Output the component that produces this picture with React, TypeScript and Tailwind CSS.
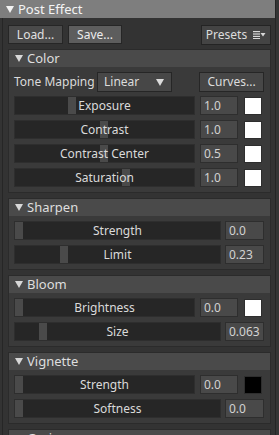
import React from "react";

const Tri = ({ className = "" }: { className?: string }) => (
  <svg width="8" height="7" viewBox="0 0 8 7" className={className}>
    <path d="M0 0 L8 0 L4 7 Z" fill="currentColor" />
  </svg>
);

const SectionHeader = ({ title }: { title: string }) => (
  <div className="h-[17px] bg-[#4a4a4a] flex items-center pl-[6px] gap-[4px] text-[#dedede] text-[13px] leading-none">
    <Tri className="text-[#d8d8d8]" />
    <span>{title}</span>
  </div>
);

const Slider = ({ label, pos }: { label: string; pos: number }) => (
  <div className="relative flex-1 h-[19px] bg-[#262626] border border-[#2e2e2e] flex items-center justify-center">
    <div
      className="absolute top-0 bottom-0 w-[8px] bg-[#4a4a4a]"
      style={{ left: pos }}
    />
    <span className="relative text-[12px] text-[#dadada] leading-none">{label}</span>
  </div>
);

const Value = ({ v, w }: { v: string; w: string }) => (
  <div className={`${w} h-[19px] bg-[#494949] border border-[#2e2e2e] flex items-center pl-[3px] text-[12px] text-[#d2d2d2] leading-none`}>
    {v}
  </div>
);

const RowSwatch = ({ label, pos, v, color }: { label: string; pos: number; v: string; color: string }) => (
  <div className="flex items-center pr-[3px]">
    <Slider label={label} pos={pos} />
    <div className="w-[5px]" />
    <Value v={v} w="w-[38px]" />
    <div className="w-[6px]" />
    <div className={`w-[18px] h-[18px] border border-[#2e2e2e] ${color}`} />
  </div>
);

const Row = ({ label, pos, v }: { label: string; pos: number; v: string }) => (
  <div className="flex items-center pr-[1px]">
    <Slider label={label} pos={pos} />
    <div className="w-[4px]" />
    <Value v={v} w="w-[39px]" />
  </div>
);

const Section = ({ title, children }: { title: string; children?: React.ReactNode }) => (
  <div className="border border-[#2b2b2b] bg-[#3a3a3a]">
    <SectionHeader title={title} />
    {children ? (
      <div className="px-[5px] pt-[5px] pb-[5px] flex flex-col gap-[5px]">{children}</div>
    ) : null}
  </div>
);

export default function App() {
  return (
    <div
      className="w-[279px] h-[435px] overflow-hidden bg-[#333333] flex"
      style={{ fontFamily: '"Noto Sans", "Open Sans", sans-serif' }}
    >
      <div className="w-[275px] flex flex-col">
        <div className="h-[18px] shrink-0 bg-[#7e7e7e] flex items-center pl-[6px] gap-[4px] text-[#f4f4f4] text-[13px] leading-none">
          <Tri className="text-[#f2f2f2]" />
          <span>Post Effect</span>
        </div>
        <div className="flex-1 ml-[2px] border-l border-[#262626] pl-[5px] pr-[4px] flex flex-col">
          <div className="flex items-center mt-[7px] h-[19px]">
            <div className="w-[55px] h-[19px] bg-[#4a4a4a] border border-[#262626] flex items-center justify-center text-[12px] text-[#e0e0e0] leading-none">
              Load...
            </div>
            <div className="w-[5px]" />
            <div className="w-[54px] h-[19px] bg-[#5d5d5d] border border-[#262626] flex items-center justify-center text-[12px] text-[#ececec] leading-none">
              Save...
            </div>
            <div className="flex-1" />
            <div className="w-[70px] h-[20px] bg-[#444444] border border-[#242424] flex items-center justify-center gap-[6px] text-[12px] text-[#dcdcdc] leading-none">
              <span>Presets</span>
              <svg width="13" height="8" viewBox="0 0 13 8">
                <rect x="0" y="0" width="7" height="1.2" fill="#d8d8d8" />
                <rect x="0" y="2.4" width="7" height="1.2" fill="#d8d8d8" />
                <rect x="0" y="4.8" width="7" height="1.2" fill="#d8d8d8" />
                <rect x="0" y="7" width="7" height="1" fill="#d8d8d8" />
                <path d="M7.5 2 L12.5 2 L10 5.5 Z" fill="#d8d8d8" />
              </svg>
            </div>
          </div>
          <div className="mt-[5px] flex flex-col gap-[5px]">
            <Section title="Color">
              <div className="flex items-center h-[20px] mb-[-1px]">
                <span className="text-[12px] text-[#dadada] leading-none w-[83px]">Tone Mapping</span>
                <div className="w-[75px] h-[20px] bg-[#474747] border border-[#262626] flex items-center justify-between pl-[6px] pr-[7px] text-[12px] text-[#dcdcdc] leading-none">
                  <span>Linear</span>
                  <Tri className="text-[#dcdcdc]" />
                </div>
                <div className="flex-1" />
                <div className="w-[65px] h-[20px] mr-[1px] bg-[#474747] border border-[#262626] flex items-center justify-center text-[12px] text-[#dcdcdc] leading-none">
                  Curves...
                </div>
              </div>
              <RowSwatch label="Exposure" pos={53} v="1.0" color="bg-white" />
              <RowSwatch label="Contrast" pos={85} v="1.0" color="bg-white" />
              <RowSwatch label="Contrast Center" pos={85} v="0.5" color="bg-white" />
              <RowSwatch label="Saturation" pos={107} v="1.0" color="bg-white" />
            </Section>
            <Section title="Sharpen">
              <Row label="Strength" pos={0} v="0.0" />
              <Row label="Limit" pos={45} v="0.23" />
            </Section>
            <Section title="Bloom">
              <RowSwatch label="Brightness" pos={0} v="0.0" color="bg-white" />
              <Row label="Size" pos={24} v="0.063" />
            </Section>
            <Section title="Vignette">
              <RowSwatch label="Strength" pos={0} v="0.0" color="bg-black" />
              <Row label="Softness" pos={0} v="0.0" />
            </Section>
            <Section title="Grain" />
          </div>
        </div>
      </div>
      <div className="w-[4px] border-l border-[#252525] bg-[#353535]" />
    </div>
  );
}
